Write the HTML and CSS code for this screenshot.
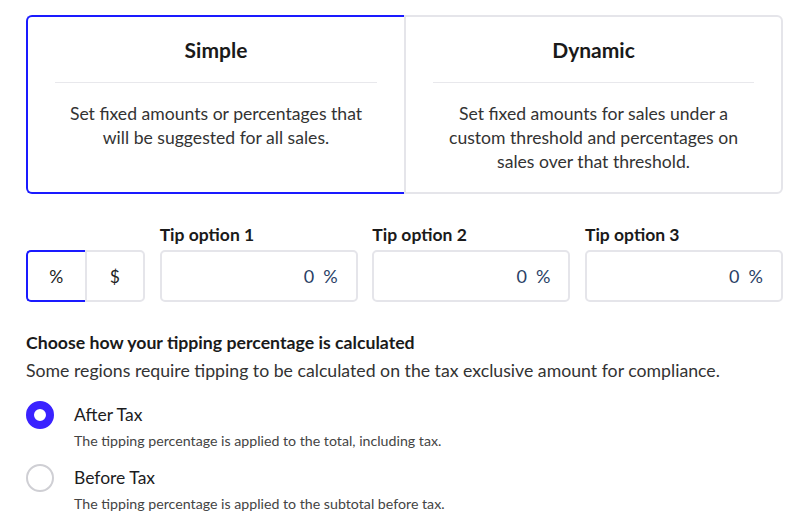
FILE: index.html
```html
<!DOCTYPE html>
<html>
<head>
<meta charset="utf-8">
<link rel="stylesheet" href="styles.css">
</head>
<body>
<div class="page">
  <div class="modes">
    <div class="mode mode-simple">
      <div class="mode-title">Simple</div>
      <div class="mode-divider"></div>
      <div class="mode-desc">Set fixed amounts or percentages that will be suggested for all sales.</div>
    </div>
    <div class="mode mode-dynamic">
      <div class="mode-title">Dynamic</div>
      <div class="mode-divider"></div>
      <div class="mode-desc">Set fixed amounts for sales under a custom threshold and percentages on sales over that threshold.</div>
    </div>
  </div>

  <div class="tips">
    <div class="tip-col">
      <div class="tip-label"></div>
      <div class="unit-toggle">
        <div class="unit unit-active">%</div>
        <div class="unit unit-dollar">$</div>
      </div>
    </div>
    <div class="tip-col">
      <div class="tip-label">Tip option 1</div>
      <div class="tip-input"><span class="tip-val">0</span><span class="tip-suf">%</span></div>
    </div>
    <div class="tip-col">
      <div class="tip-label">Tip option 2</div>
      <div class="tip-input"><span class="tip-val">0</span><span class="tip-suf">%</span></div>
    </div>
    <div class="tip-col">
      <div class="tip-label">Tip option 3</div>
      <div class="tip-input"><span class="tip-val">0</span><span class="tip-suf">%</span></div>
    </div>
  </div>

  <div class="calc">
    <div class="calc-title">Choose how your tipping percentage is calculated</div>
    <div class="calc-sub">Some regions require tipping to be calculated on the tax exclusive amount for compliance.</div>
    <div class="radio-row">
      <div class="radio radio-on"></div>
      <div class="radio-text">
        <div class="radio-label">After Tax</div>
        <div class="radio-desc">The tipping percentage is applied to the total, including tax.</div>
      </div>
    </div>
    <div class="radio-row radio-row-2">
      <div class="radio radio-off"></div>
      <div class="radio-text">
        <div class="radio-label">Before Tax</div>
        <div class="radio-desc">The tipping percentage is applied to the subtotal before tax.</div>
      </div>
    </div>
  </div>
</div>
</body>
</html>
```

FILE: styles.css
```css
* { box-sizing: border-box; }
html, body {
  margin: 0;
  padding: 0;
  background: #ffffff;
}
body {
  font-family: Lato, "Open Sans", "Liberation Sans", sans-serif;
  color: #1c1c1e;
}
.page {
  padding: 15px 17px 0 26px;
}
.modes {
  display: grid;
  grid-template-columns: 378px 1fr;
  height: 179px;
}
.mode {
  padding: 21px 27px 0 27px;
  text-align: center;
}
.mode-simple {
  border: 2px solid #1a1aff;
  border-right: none;
  border-radius: 6px 0 0 6px;
}
.mode-dynamic {
  border: 2px solid #e5e5ea;
  border-radius: 0 6px 6px 0;
}
.mode-title {
  font-size: 21px;
  font-weight: 700;
  line-height: 24px;
  color: #1a1a1a;
}
.mode-divider {
  height: 1px;
  background: #e8e8ec;
  margin: 20px 0 0 0;
}
.mode-desc {
  margin-top: 19px;
  font-size: 17.6px;
  line-height: 24px;
  color: #333333;
  padding: 0 6px;
}
.tips {
  display: grid;
  grid-template-columns: 119px 1fr 1fr 1fr;
  column-gap: 14.67px;
  margin-top: 31px;
}
.tip-label {
  font-size: 17.5px;
  font-weight: 700;
  line-height: 20px;
  height: 20px;
  margin-bottom: 5px;
  color: #1a1a1a;
}
.unit-toggle {
  display: flex;
  height: 52px;
}
.unit {
  flex: 1;
  display: flex;
  align-items: center;
  justify-content: center;
  font-size: 17.5px;
  color: #222222;
}
.unit-active {
  border: 2px solid #1a1aff;
  border-right: none;
  border-radius: 5px 0 0 5px;
}
.unit-dollar {
  border: 2px solid #e5e5ea;
  border-radius: 0 5px 5px 0;
}
.tip-input {
  height: 52px;
  border: 2px solid #e5e5ea;
  border-radius: 5px;
  display: flex;
  align-items: center;
  justify-content: flex-end;
  padding-right: 18px;
  font-size: 18px;
  color: #2a3f66;
  gap: 9px;
}
.calc {
  margin-top: 29px;
}
.calc-title {
  font-size: 17.7px;
  font-weight: 700;
  line-height: 24px;
  color: #1a1a1a;
}
.calc-sub {
  margin-top: 4px;
  font-size: 17.7px;
  line-height: 24px;
  color: #333333;
}
.radio-row {
  display: flex;
  align-items: flex-start;
  gap: 20px;
  margin-top: 20px;
}
.radio-row-2 {
  margin-top: 15px;
}
.radio {
  width: 28px;
  height: 28px;
  border-radius: 50%;
  flex: none;
  margin-top: -2px;
}
.radio-on {
  border: 8px solid #3a22ff;
  background: #ffffff;
}
.radio-off {
  border: 2px solid #cfcfd4;
  background: #ffffff;
}
.radio-label {
  font-size: 17.5px;
  line-height: 24px;
  color: #1c1c1e;
}
.radio-desc {
  margin-top: 4px;
  font-size: 14.2px;
  line-height: 20px;
  color: #444444;
}
```
